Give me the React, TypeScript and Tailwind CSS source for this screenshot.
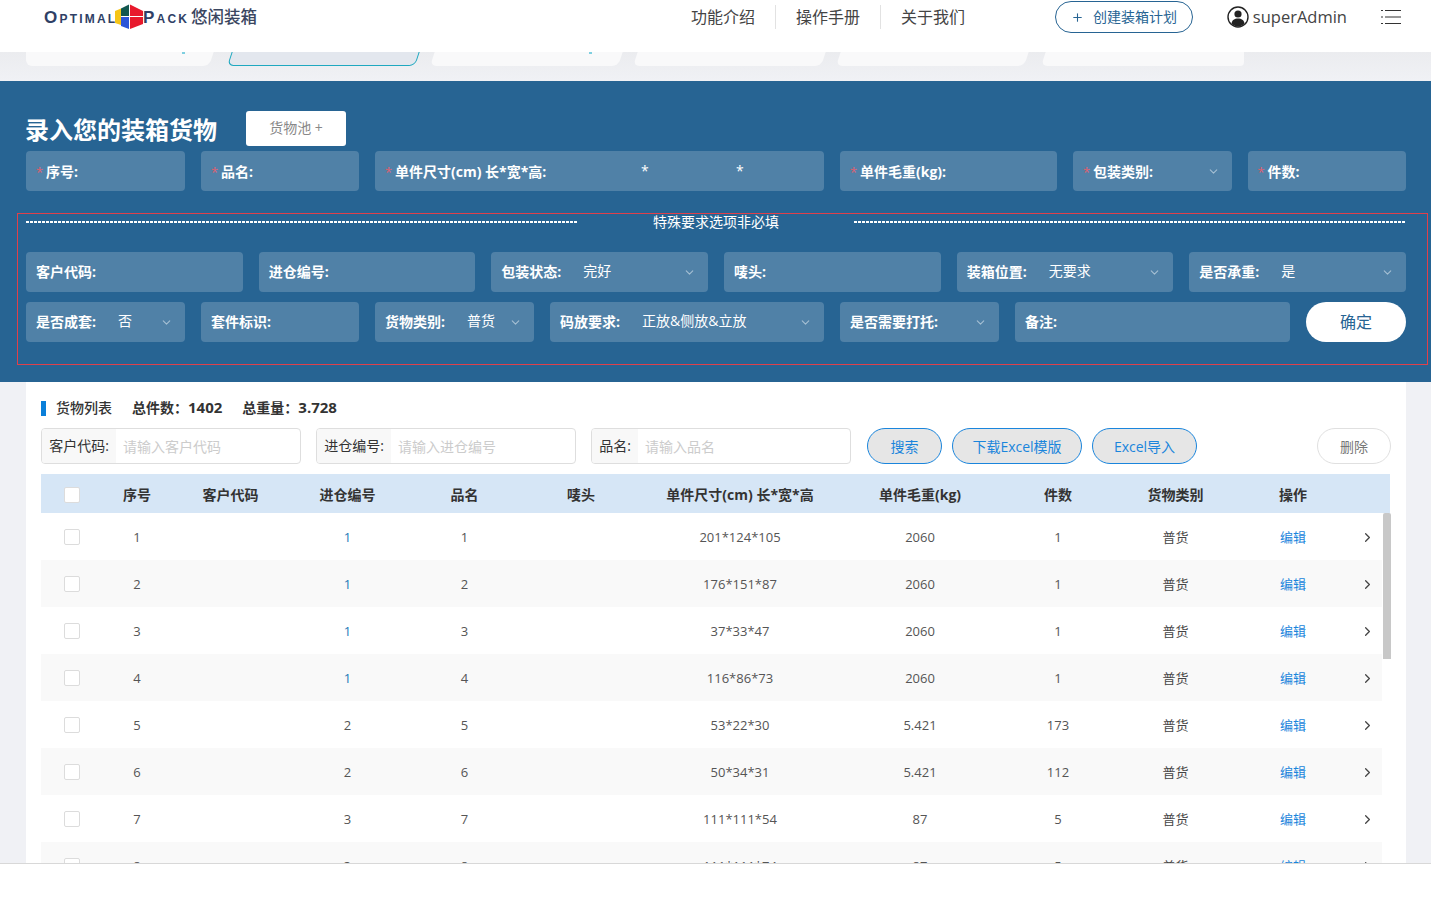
import { ChevronDown, ChevronRight, Plus } from "lucide-react";

const rows = [
  { id: 1, inNo: "1", size: "201*124*105", weight: "2060", count: "1" },
  { id: 2, inNo: "1", size: "176*151*87", weight: "2060", count: "1" },
  { id: 3, inNo: "1", size: "37*33*47", weight: "2060", count: "1" },
  { id: 4, inNo: "1", size: "116*86*73", weight: "2060", count: "1" },
  { id: 5, inNo: "2", size: "53*22*30", weight: "5.421", count: "173" },
  { id: 6, inNo: "2", size: "50*34*31", weight: "5.421", count: "112" },
  { id: 7, inNo: "3", size: "111*111*54", weight: "87", count: "5" },
  { id: 8, inNo: "3", size: "111*111*74", weight: "87", count: "5" },
];

const colsClass = "grid grid-cols-[61px_70px_117px_117px_117px_116px_202px_158px_118px_117px_118px_30px] items-center text-center";

// logo mark, red and blue house
const LogoMark = () => (
  <svg width="28" height="26" viewBox="0 0 28 26" className="shrink-0">
    <polygon points="0,7 6,4.5 6,21 0,19" fill="#f5c518" />
    <polygon points="6,4.5 14,0.5 14,12 6,12" fill="#12574f" />
    <polygon points="6,13 14,13 14,25 6,22" fill="#2b55d8" />
    <polygon points="15,0.5 28,7 28,12 15,12" fill="#e8192c" />
    <polygon points="15,13 28,13 28,20 15,25" fill="#e8192c" />
  </svg>
);

const UserIcon = () => (
  <svg width="22" height="22" viewBox="0 0 22 22" className="shrink-0">
    <circle cx="11" cy="11" r="10" fill="#fff" stroke="#222" strokeWidth="1.4" />
    <circle cx="11" cy="8" r="3.6" fill="#222" />
    <path d="M4.5 17.5c.6-3.6 3-5 6.5-5s5.900 1.400 6.500 5c-1.700 1.900-4 2.900-6.500 2.900s-4.800-1-6.500-2.900z" fill="#222" />
  </svg>
);

const MenuIcon = () => (
  <svg width="20" height="16" viewBox="0 0 20 16" className="shrink-0" stroke="#333" strokeWidth="1">
    <path d="M0 1.500h2M4 1.500h16M0 8h2M4 8h16M0 14.500h2M4 14.500h16" />
  </svg>
);

const Field = ({ label, value, required, select, className = "" }: { label: string; value?: string; required?: boolean; select?: boolean; className?: string }) => (
  <div className={`flex h-10 items-center rounded-[4px] bg-[#5081a7] pl-[10px] pr-[12px] text-sm text-white ${className}`}>
    {required && <span className="w-[10px] translate-y-px text-[13px] font-normal text-[#e0606f]">*</span>}
    <span className={`font-bold whitespace-nowrap ${required ? "translate-y-px" : ""}`}>{label}</span>
    {value && <span className="ml-[22px] -translate-y-px whitespace-nowrap">{value}</span>}
    {select && <ChevronDown size={13} className="ml-auto text-[#a5bfd3]" />}
  </div>
);

const SearchInput = ({ label, placeholder, addonClass }: { label: string; placeholder: string; addonClass: string }) => (
  <div className="flex h-9 w-[260px] overflow-hidden rounded-[4px] border border-[#dedede]">
    <div className={`flex items-center justify-center bg-[#f8f8f8] text-sm text-[#333] ${addonClass}`}>{label}</div>
    <input placeholder={placeholder} className="min-w-0 flex-1 pl-[7px] pr-2 pt-px text-sm outline-none placeholder:text-[#cccccc]" />
  </div>
);

const BlueButton = ({ children, className = "" }: { children: string; className?: string }) => (
  <button className={`h-9 rounded-full border border-[#1a85dc] bg-[#e6e6e6] pt-px text-sm text-[#1a85dc] ${className}`}>{children}</button>
);

const Tab = ({ active, className = "" }: { active?: boolean; className?: string }) => (
  <div className={`-mt-4 h-[30px] w-[188px] -skew-x-[18deg] rounded-b-[6px] ${active ? "border border-[#1ea8c0] bg-[#e3e7ee]" : "bg-[#f9f9fa]"} ${className}`} />
);

export default function App() {
  return (
    <div className="h-[898px] w-full overflow-hidden bg-white font-['Open_Sans','Noto_Sans_CJK_SC',sans-serif]">
      <div className="h-[863px] overflow-hidden bg-[#f0f1f5]">
        {/* header */}
        <header className="relative z-10 h-[52px] bg-white">
          <div className="flex h-[34px] items-center pl-[44px] pr-[30px]">
            <div className="flex items-center text-[#2f3f66]">
              <span className="w-[71px] whitespace-nowrap font-['Liberation_Sans',sans-serif] text-[17px] font-bold leading-none tracking-[2.2px] [font-variant:small-caps]">Optimal</span>
              <LogoMark />
              <span className="w-[48px] whitespace-nowrap font-['Liberation_Sans',sans-serif] text-[17px] font-bold leading-none tracking-[2.2px] [font-variant:small-caps]">Pack</span>
              <span className="whitespace-nowrap text-[16.5px] font-medium text-[#3a4660]">悠闲装箱</span>
            </div>
            <nav className="ml-[434px] flex items-center whitespace-nowrap text-base text-[#444]">
              <span>功能介绍</span>
              <span className="mx-5 h-6 w-px bg-[#e2e2e2]" />
              <span>操作手册</span>
              <span className="mx-5 h-6 w-px bg-[#e2e2e2]" />
              <span>关于我们</span>
            </nav>
            <button className="ml-[90px] flex h-8 w-[138px] items-center justify-center gap-[9px] whitespace-nowrap rounded-full border border-[#276493] text-sm text-[#276493]">
              <Plus size={13} />
              创建装箱计划
            </button>
            <div className="ml-[34px] flex items-center gap-[4px] text-[#444]">
              <UserIcon />
              <span className="text-[16.5px]">superAdmin</span>
            </div>
            <div className="ml-[34px]">
              <MenuIcon />
            </div>
          </div>
        </header>

        {/* tab strip */}
        <div className="relative flex h-[29px] gap-[15px] overflow-hidden bg-gradient-to-b from-[#ebecef] to-[#f0f1f5] pl-[26px]">
          <div className="h-[14px] w-[191px] overflow-hidden rounded-bl-[6px]">
            <Tab className="-ml-3 w-[200px]" />
          </div>
          <Tab active />
          <Tab />
          <Tab />
          <Tab />
          <div className="-ml-[4px] h-[14px] w-[204px] overflow-hidden rounded-br-[4px]">
            <Tab className="ml-[6px] w-[230px]" />
          </div>
          <span className="absolute left-[182px] top-0 h-[2px] w-[3px] bg-[#7fcfe0]" />
          <span className="absolute left-[589px] top-0 h-[2px] w-[3px] bg-[#7fcfe0]" />
        </div>

        {/* entry panel */}
        <section className="bg-[#276493] pb-[17px] pl-[17px] pr-[3px] pt-[30px]">
          <div className="flex h-[35px] items-center pl-[9px]">
            <h1 className="-ml-px mt-[3px] text-2xl font-bold text-white">录入您的装箱货物</h1>
            <button className="ml-[29px] h-[35px] w-[100px] rounded-[3px] bg-white pb-px text-sm text-[#888]">货物池 +</button>
          </div>

          <div className="mt-[5px] grid grid-cols-[159px_158px_449px_217px_158.5px_158.5px] gap-x-4 pl-[9px] pr-[22px]">
            <Field required label="序号:" />
            <Field required label="品名:" />
            <div className="relative">
              <Field required label="单件尺寸(cm) 长*宽*高:" />
              <span className="absolute left-[266px] top-[10px] text-sm text-white">*</span>
              <span className="absolute left-[361px] top-[10px] text-sm text-white">*</span>
            </div>
            <Field required label="单件毛重(kg):" />
            <Field required select label="包装类别:" />
            <Field required label="件数:" />
          </div>

          {/* optional fields */}
          <div className="mt-[22px] border border-[#e0404a] pb-[22px] pl-2 pr-[21px]">
            <div className="flex h-[16px] items-center text-sm text-white">
              <div className="h-[2px] w-[552px] bg-[repeating-linear-gradient(90deg,#fff_0_3px,transparent_3px_4px)]" />
              <span className="flex-1 text-center">特殊要求选项非必填</span>
              <div className="h-[2px] w-[552px] bg-[repeating-linear-gradient(90deg,#fff_0_3px,transparent_3px_4px)]" />
            </div>
            <div className="mt-[22px] grid grid-cols-6 gap-x-4">
              <Field label="客户代码:" />
              <Field label="进仓编号:" />
              <Field select label="包装状态:" value="完好" />
              <Field label="唛头:" />
              <Field select label="装箱位置:" value="无要求" />
              <Field select label="是否承重:" value="是" />
            </div>
            <div className="mt-[10px] grid grid-cols-[159px_158px_159px_274px_159px_275px_100px] gap-x-4">
              <Field select label="是否成套:" value="否" />
              <Field label="套件标识:" />
              <Field select label="货物类别:" value="普货" />
              <Field select label="码放要求:" value="正放&侧放&立放" />
              <Field select label="是否需要打托:" />
              <Field label="备注:" />
              <button className="h-10 rounded-full bg-white text-base text-[#276493]">确定</button>
            </div>
          </div>
        </section>

        {/* goods list */}
        <section className="ml-[26px] h-[500px] w-[1380px] bg-white pl-[15px] pt-[18px]">
          <div className="flex h-4 items-center text-sm text-[#333]">
            <span className="h-[15px] w-[5px] bg-[#0a7fd9]" />
            <span className="ml-[10px] font-medium">货物列表</span>
            <span className="ml-5 font-bold">总件数：</span>
            <span className="text-[15px] font-bold">1402</span>
            <span className="ml-5 font-bold">总重量：</span>
            <span className="text-[15px] font-bold">3.728</span>
          </div>

          <div className="mt-3 flex items-center">
            <SearchInput label="客户代码:" placeholder="请输入客户代码" addonClass="w-[74px]" />
            <div className="ml-[15px]">
              <SearchInput label="进仓编号:" placeholder="请输入进仓编号" addonClass="w-[74px]" />
            </div>
            <div className="ml-[15px]">
              <SearchInput label="品名:" placeholder="请输入品名" addonClass="w-[46px]" />
            </div>
            <BlueButton className="ml-4 w-[75px]">搜索</BlueButton>
            <BlueButton className="ml-[10px] w-[130px]">下载Excel模版</BlueButton>
            <BlueButton className="ml-[10px] w-[105px]">Excel导入</BlueButton>
            <button className="ml-[120px] h-9 w-[74px] rounded-full border border-[#e0e0e0] bg-white pt-px text-sm text-[#777]">删除</button>
          </div>

          <div className="relative mt-[10px] w-[1349px]">
            <div className={`${colsClass} h-[39px] bg-[#d6e6f6] pt-[2px] text-sm font-bold text-[#333]`}>
              <span className="ml-[23px] h-4 w-4 rounded-[2px] border border-[#dcdcdc] bg-white" />
              <span>序号</span>
              <span>客户代码</span>
              <span>进仓编号</span>
              <span>品名</span>
              <span>唛头</span>
              <span>单件尺寸(cm) 长*宽*高</span>
              <span>单件毛重(kg)</span>
              <span>件数</span>
              <span>货物类别</span>
              <span>操作</span>
              <span />
            </div>
            {rows.map((row) => (
              <div key={row.id} className={`${colsClass} h-[47px] w-[1341px] pt-[2px] text-[13px] text-[#555] ${row.id % 2 === 0 ? "bg-[#f9f9f9]" : "bg-white"}`}>
                <span className="-mt-px ml-[23px] h-4 w-4 rounded-[2px] border border-[#dcdcdc] bg-white" />
                <span>{row.id}</span>
                <span />
                <span className={row.inNo === "1" ? "text-[#1f7ab8]" : ""}>{row.inNo}</span>
                <span>{row.id}</span>
                <span />
                <span>{row.size}</span>
                <span>{row.weight}</span>
                <span>{row.count}</span>
                <span className="text-[#444]">普货</span>
                <span className="text-[#1a85dc]">编辑</span>
                <ChevronRight size={15} className="mx-auto text-[#444]" />
              </div>
            ))}
            {/* scrollbar */}
            <div className="absolute left-[1342px] top-[39px] h-[146px] w-2 rounded-t-[2px] bg-[#c8c8c8]" />
          </div>
        </section>
      </div>
      <div className="h-[35px] border-t border-[#d8d8d8] bg-white" />
    </div>
  );
}
